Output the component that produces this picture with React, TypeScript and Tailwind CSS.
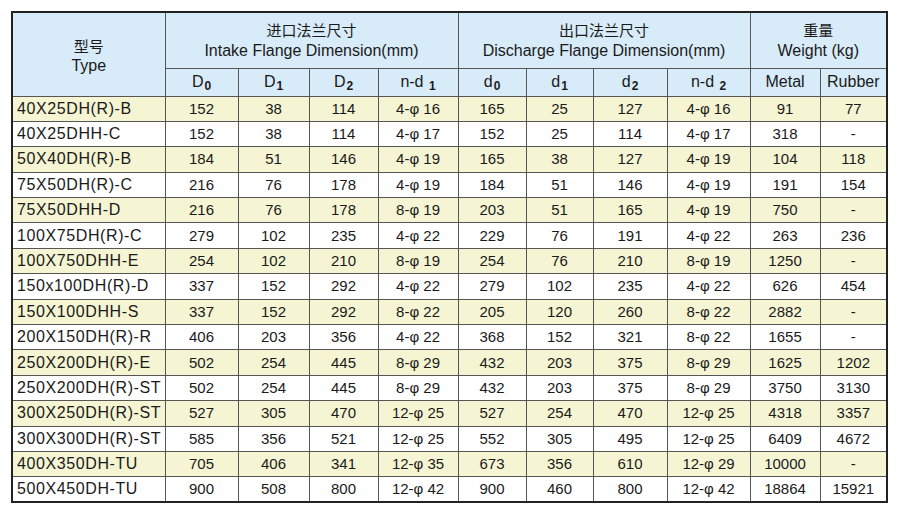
const rows: string[][] = [
  ["40X25DH(R)-B", "152", "38", "114", "4-φ 16", "165", "25", "127", "4-φ 16", "91", "77"],
  ["40X25DHH-C", "152", "38", "114", "4-φ 17", "152", "25", "114", "4-φ 17", "318", "-"],
  ["50X40DH(R)-B", "184", "51", "146", "4-φ 19", "165", "38", "127", "4-φ 19", "104", "118"],
  ["75X50DH(R)-C", "216", "76", "178", "4-φ 19", "184", "51", "146", "4-φ 19", "191", "154"],
  ["75X50DHH-D", "216", "76", "178", "8-φ 19", "203", "51", "165", "4-φ 19", "750", "-"],
  ["100X75DH(R)-C", "279", "102", "235", "4-φ 22", "229", "76", "191", "4-φ 22", "263", "236"],
  ["100X750DHH-E", "254", "102", "210", "8-φ 19", "254", "76", "210", "8-φ 19", "1250", "-"],
  ["150x100DH(R)-D", "337", "152", "292", "4-φ 22", "279", "102", "235", "4-φ 22", "626", "454"],
  ["150X100DHH-S", "337", "152", "292", "8-φ 22", "205", "120", "260", "8-φ 22", "2882", "-"],
  ["200X150DH(R)-R", "406", "203", "356", "4-φ 22", "368", "152", "321", "8-φ 22", "1655", "-"],
  ["250X200DH(R)-E", "502", "254", "445", "8-φ 29", "432", "203", "375", "8-φ 29", "1625", "1202"],
  ["250X200DH(R)-ST", "502", "254", "445", "8-φ 29", "432", "203", "375", "8-φ 29", "3750", "3130"],
  ["300X250DH(R)-ST", "527", "305", "470", "12-φ 25", "527", "254", "470", "12-φ 25", "4318", "3357"],
  ["300X300DH(R)-ST", "585", "356", "521", "12-φ 25", "552", "305", "495", "12-φ 25", "6409", "4672"],
  ["400X350DH-TU", "705", "406", "341", "12-φ 35", "673", "356", "610", "12-φ 29", "10000", "-"],
  ["500X450DH-TU", "900", "508", "800", "12-φ 42", "900", "460", "800", "12-φ 42", "18864", "15921"],
];

const Sub = ({ children }: { children: React.ReactNode }) => (
  <span className="text-[12px] font-bold align-[-3px] ml-[1px]">{children}</span>
);

const th = "border border-[#555] bg-[#d8ebf9] text-center font-normal";

export default function App() {
  return (
    <div className="w-[900px] h-[517px] bg-white pt-[11px] pl-[11px] font-['Liberation_Sans','Noto_Sans_CJK_SC',sans-serif]">
      <table className="table-fixed border-collapse border-2 border-[#222] w-[875px] text-[15px] text-[#1a1a1a]">
        <colgroup>
          <col className="w-[153px]" />
          <col className="w-[73px]" />
          <col className="w-[71px]" />
          <col className="w-[69px]" />
          <col className="w-[80px]" />
          <col className="w-[68px]" />
          <col className="w-[67px]" />
          <col className="w-[74px]" />
          <col className="w-[83px]" />
          <col className="w-[70px]" />
          <col className="w-[67px]" />
        </colgroup>
        <thead>
          <tr className="h-[56px]">
            <th rowSpan={2} className={`${th} leading-[19px] pt-[4px] text-[16px]`}>
              <div className="text-[15px]">型号</div>
              <div>Type</div>
            </th>
            <th colSpan={4} className={`${th} leading-[20px] text-[16px] pt-[2px]`}>
              <div className="text-[15px]">进口法兰尺寸</div>
              <div>Intake Flange Dimension(mm)</div>
            </th>
            <th colSpan={4} className={`${th} leading-[20px] text-[16px] pt-[2px]`}>
              <div className="text-[15px]">出口法兰尺寸</div>
              <div>Discharge Flange Dimension(mm)</div>
            </th>
            <th colSpan={2} className={`${th} leading-[20px] text-[16px] pt-[2px]`}>
              <div className="text-[15px]">重量</div>
              <div>Weight (kg)</div>
            </th>
          </tr>
          <tr className="h-[28px] text-[16px]">
            <th className={th}>D<Sub>0</Sub></th>
            <th className={th}>D<Sub>1</Sub></th>
            <th className={th}>D<Sub>2</Sub></th>
            <th className={th}>n-d <Sub>1</Sub></th>
            <th className={th}>d<Sub>0</Sub></th>
            <th className={th}>d<Sub>1</Sub></th>
            <th className={th}>d<Sub>2</Sub></th>
            <th className={th}>n-d <Sub>2</Sub></th>
            <th className={th}>Metal</th>
            <th className={th}>Rubber</th>
          </tr>
        </thead>
        <tbody>
          {rows.map((r, i) => (
            <tr key={i} className={`h-[25.4px] ${i % 2 === 0 ? "bg-[#f5f5d3]" : "bg-white"}`}>
              {r.map((c, j) => (
                <td
                  key={j}
                  className={`border border-[#555] p-0 leading-[24px] ${j === 0 ? "text-left pl-[4px] text-[16px] tracking-[0.6px]" : "text-center"}`}
                >
                  {c}
                </td>
              ))}
            </tr>
          ))}
        </tbody>
      </table>
    </div>
  );
}
